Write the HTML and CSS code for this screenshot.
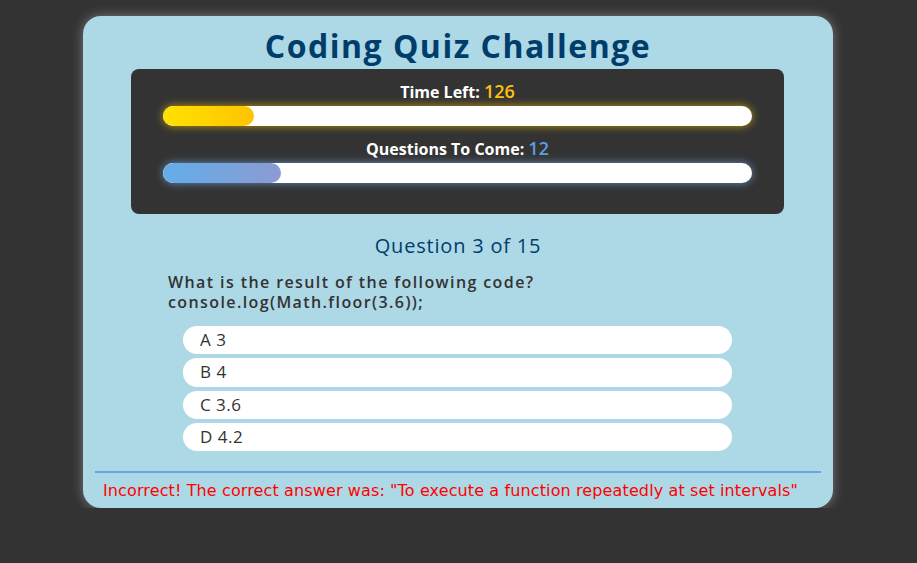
FILE: index.html
```html
<!DOCTYPE html>
<html lang="en">
<head>
<meta charset="utf-8">
<title>Coding Quiz Challenge</title>
<link rel="stylesheet" href="styles.css">
</head>
<body>
<main class="card">
  <h1 class="title">Coding Quiz Challenge</h1>
  <section class="panel">
    <div class="label">Time Left: <span class="num num-time">126</span></div>
    <div class="bar bar-time"><div class="fill fill-time" style="width:91px"></div></div>
    <div class="label label-second">Questions To Come: <span class="num num-q">12</span></div>
    <div class="bar bar-q"><div class="fill fill-q" style="width:118px"></div></div>
  </section>
  <h2 class="counter">Question 3 of 15</h2>
  <p class="question">What is the result of the following code?<br>console.log(Math.floor(3.6));</p>
  <ul class="options">
    <li class="option">A 3</li>
    <li class="option">B 4</li>
    <li class="option">C 3.6</li>
    <li class="option">D 4.2</li>
  </ul>
  <hr class="divider">
  <p class="feedback">Incorrect! The correct answer was: "To execute a function repeatedly at set intervals"</p>
</main>
</body>
</html>
```

FILE: styles.css
```css
* { box-sizing: border-box; }
html, body { margin: 0; padding: 0; }
body {
  background: #333333;
  font-family: "Open Sans", "DejaVu Sans", sans-serif;
  padding: 16px 1px 0 0;
}
.card {
  width: 750px;
  margin: 0 auto;
  background: #add8e6;
  border-radius: 18px;
  padding: 12px 12px 6px;
  box-shadow: 0 0 12px rgba(255, 255, 255, 0.35);
}
.title {
  margin: 0 0 6px;
  text-align: center;
  font-size: 32px;
  line-height: 35px;
  font-weight: 700;
  letter-spacing: 1.5px;
  color: #003d6b;
}
.panel {
  width: 653px;
  margin: 0 0 0 36px;
  background: #333333;
  border-radius: 8px;
  padding: 11px 32px 31px;
}
.label {
  text-align: center;
  color: #ffffff;
  font-weight: 700;
  font-size: 16px;
  line-height: 22px;
  margin-bottom: 3px;
}
.label-second { margin-top: 11px; }
.num { font-size: 18px; font-weight: 600; }
.num-time { color: #ffc107; }
.num-q { color: #5b9ee0; }
.bar {
  height: 20px;
  background: #ffffff;
  border-radius: 10px;
  overflow: hidden;
}
.bar-time { box-shadow: 0 0 8px rgba(255, 200, 0, 0.7); }
.bar-q { box-shadow: 0 0 8px rgba(120, 180, 240, 0.7); }
.fill { height: 100%; border-radius: 10px; }
.fill-time { background: linear-gradient(to right, #ffe100, #ffc400); }
.fill-q { background: linear-gradient(to right, #62aeea, #8c9ad2); }
.counter {
  margin: 20px 0 0;
  text-align: center;
  font-size: 20px;
  line-height: 24px;
  font-weight: 400;
  letter-spacing: 0.8px;
  color: #003d6b;
}
.question {
  width: 580px;
  margin: 14px auto 0;
  font-size: 16px;
  line-height: 20px;
  font-weight: 600;
  letter-spacing: 1.4px;
  color: #333333;
}
.options {
  list-style: none;
  width: 549px;
  margin: 14px 0 0 88px;
  padding: 0;
  display: flex;
  flex-direction: column;
  gap: 4.2px;
}
.option {
  height: 28.2px;
  background: #ffffff;
  border-radius: 14px;
  padding-left: 17px;
  font-size: 17px;
  line-height: 28px;
  font-weight: 400;
  letter-spacing: 0.5px;
  color: #333333;
}
.divider {
  margin: 20px 0 0;
  border: 0;
  height: 2px;
  background: #64a8e8;
}
.feedback {
  margin: 7px 0 0;
  padding-left: 8px;
  font-family: "DejaVu Sans", sans-serif;
  font-size: 16px;
  line-height: 22px;
  letter-spacing: 0.12px;
  color: #ff0000;
}
```
